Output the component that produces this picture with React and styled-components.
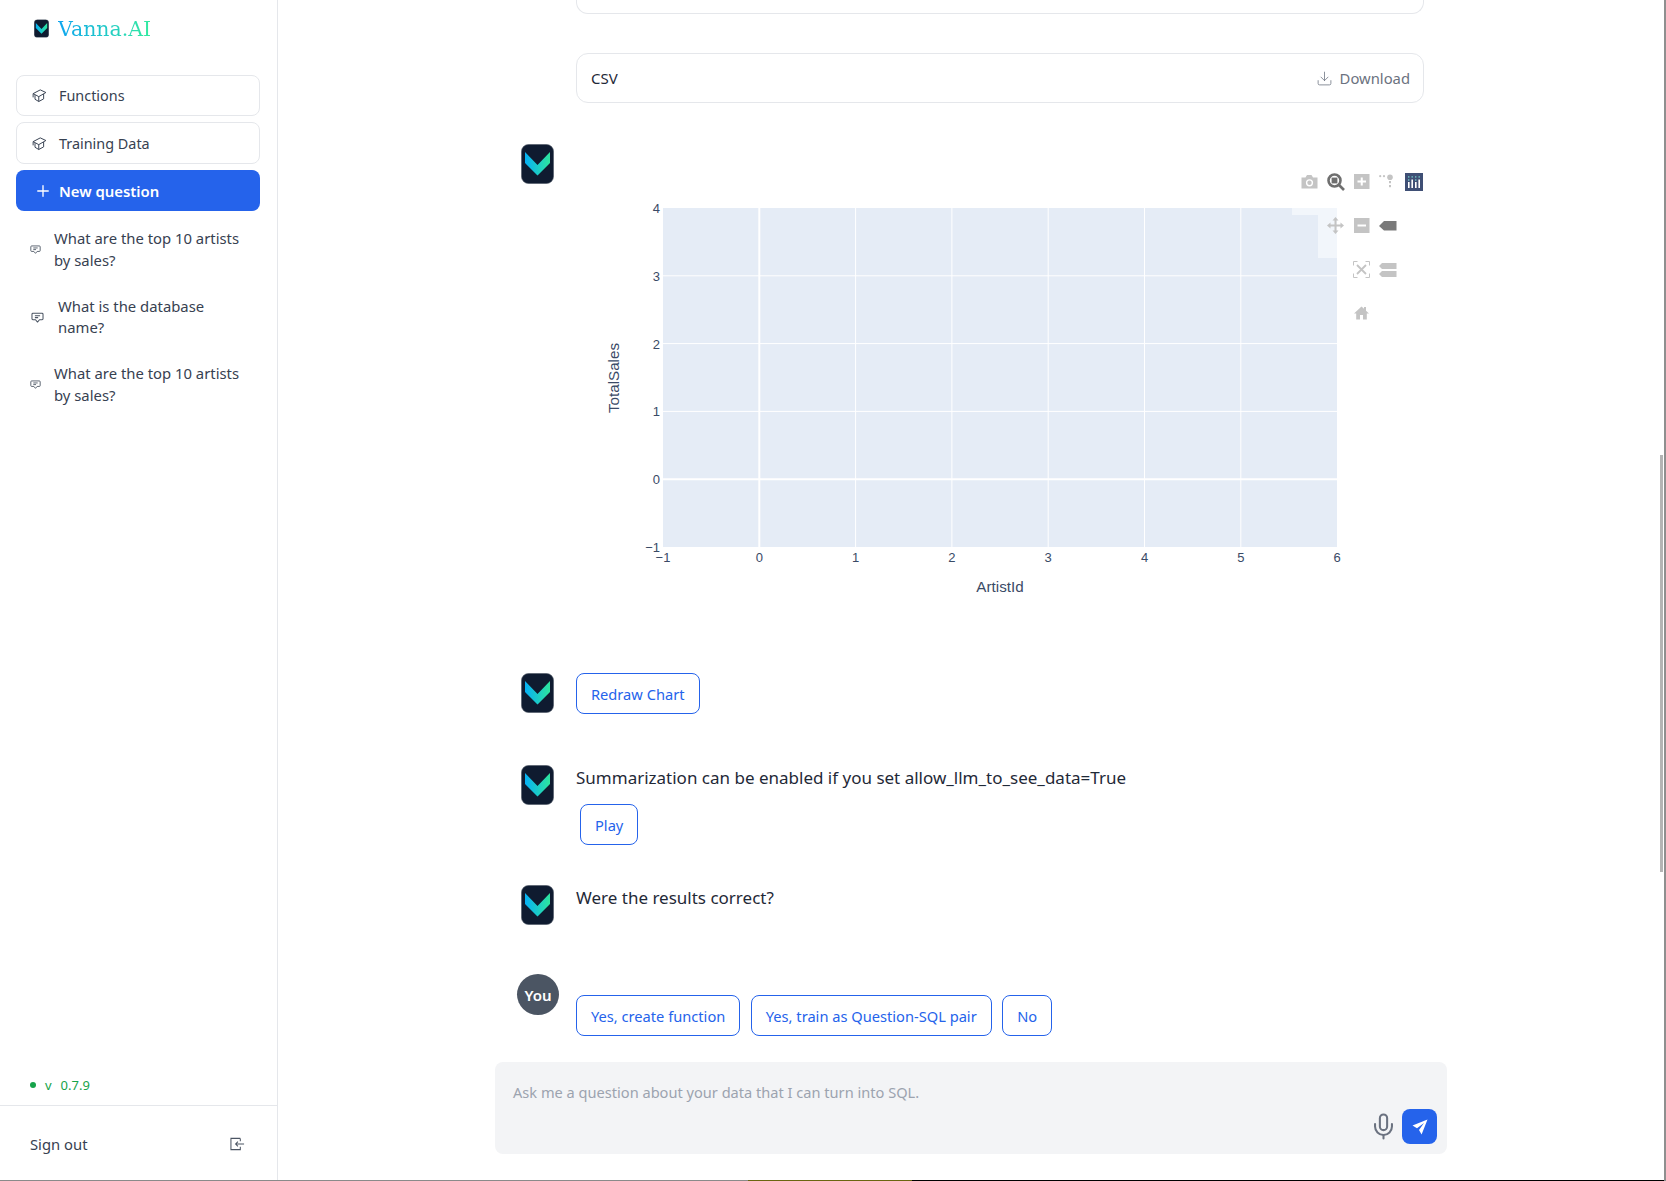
import React from 'react';
import styled, { createGlobalStyle } from 'styled-components';
import { Plus, Mic, Download } from 'lucide-react';

const Global = createGlobalStyle`
  html, body { margin: 0; padding: 0; height: 100%; background: #fff; }
  body { font-family: "Noto Sans", "Open Sans", sans-serif; color: #1f2937; overflow: hidden; }
  * { box-sizing: border-box; }
  svg { flex: none; }
`;

const Page = styled.div`
  position: relative;
  width: 1666px;
  height: 1181px;
  display: flex;
  overflow: hidden;
  background: #fff;
  border-right: 2px solid #8f8f8f;
  &::after {
    content: "";
    position: absolute;
    left: 0;
    right: 0;
    bottom: 0;
    height: 1px;
    background: linear-gradient(90deg, #8a8a8a 748px, #6b6510 748px, #6b6510 912px, #000 912px);
  }
`;

const Sidebar = styled.aside`
  width: 278px;
  flex: none;
  display: flex;
  flex-direction: column;
  border-right: 1px solid #e5e7eb;
`;
const SideTop = styled.div`
  flex: 1;
  padding: 0 17px 0 16px;
  display: flex;
  flex-direction: column;
`;
const Brand = styled.div`
  height: 75px;
  padding: 19px 0 0 18px;
  display: flex;
  align-items: flex-start;
  gap: 9px;
`;
const BrandName = styled.span`
  font-family: "DejaVu Serif", serif;
  font-size: 20.5px;
  line-height: 20px;
  background: linear-gradient(90deg, #0ea5f0, #34eba0);
  -webkit-background-clip: text;
  background-clip: text;
  color: transparent;
`;
const NavButton = styled.div`
  height: ${p => p.$h || 41}px;
  margin-bottom: 6px;
  border: 1px solid #e5e7eb;
  border-radius: 8px;
  display: flex;
  align-items: center;
  gap: 12px;
  padding-left: 15px;
  font-size: 14.4px;
  color: #374151;
`;
const NewButton = styled.div`
  height: 41px;
  border-radius: 8px;
  background: #2563eb;
  color: #fff;
  font-size: 14.9px;
  font-weight: 600;
  display: flex;
  align-items: center;
  gap: 7px;
  padding: 1px 0 0 18px;
`;
const ChatList = styled.div`
  display: flex;
  flex-direction: column;
  margin-top: 17px;
  gap: 24.5px;
`;
const ChatItem = styled.div`
  display: flex;
  align-items: center;
  gap: ${p => p.$gap}px;
  padding-left: ${p => p.$pad}px;
  font-size: 14.85px;
  line-height: 21.5px;
  color: #374151;
`;
const ChatText = styled.span`
  width: 192px;
`;
const Version = styled.div`
  height: 25px;
  padding-left: 30px;
  display: flex;
  align-items: center;
  font-size: 13px;
  color: #16a34a;
  margin-bottom: 8px;
`;
const Dot = styled.span`
  width: 6px;
  height: 6px;
  border-radius: 50%;
  background: #16a34a;
  margin-right: 9px;
`;
const VersionNo = styled.span`
  margin-left: 9px;
`;
const SignOut = styled.div`
  height: 76px;
  border-top: 1px solid #e5e7eb;
  display: flex;
  align-items: center;
  justify-content: space-between;
  padding: 0 32px 0 30px;
  font-size: 14.8px;
  color: #374151;
`;

const Main = styled.main`
  flex: 1;
  display: flex;
  flex-direction: column;
  position: relative;
  min-width: 0;
`;
const Thread = styled.div`
  flex: 1;
  overflow: hidden;
  padding-left: 298px;
  width: 1146px;
`;
const CardTail = styled.div`
  height: 14px;
  border: 1px solid #e5e7eb;
  border-top: none;
  border-radius: 0 0 12px 12px;
  margin-bottom: 39px;
`;
const DownloadCard = styled.div`
  height: 50px;
  border: 1px solid #e5e7eb;
  border-radius: 12px;
  display: flex;
  align-items: center;
  justify-content: space-between;
  padding: 0 13px 0 14px;
  font-size: 15px;
  color: #1f2937;
`;
const DownloadLink = styled.div`
  display: flex;
  align-items: center;
  gap: 7px;
  font-size: 14.8px;
  color: #6b7280;
`;
const Row = styled.div`
  display: flex;
  gap: 22px;
  margin-left: -55px;
  margin-top: ${p => p.$mt || 0}px;
`;
const Avatar = styled.div`
  width: 33px;
  flex: none;
`;
const Body = styled.div`
  flex: 1;
  min-width: 0;
`;
const Message = styled.p`
  margin: 0;
  font-size: 17px;
  line-height: 26px;
  color: #1f2937;
`;
const OutlineButton = styled.div`
  display: inline-flex;
  align-items: center;
  height: 41px;
  padding: 0 14px;
  border: 1px solid #2563eb;
  border-radius: 8px;
  font-size: 14.65px;
  color: #2563eb;
  margin-left: ${p => p.$ml || 0}px;
  margin-top: ${p => p.$mt || 0}px;
  vertical-align: top;
`;
const ButtonRow = styled.div`
  display: flex;
  gap: 10.5px;
  padding-top: 21px;
`;
const YouBadge = styled.div`
  width: 42px;
  height: 41px;
  flex: none;
  border-radius: 50%;
  background: #4b5563;
  color: #fff;
  font-size: 15px;
  font-weight: 600;
  display: flex;
  align-items: center;
  justify-content: center;
  margin-left: -4px;
`;
const YouRow = styled(Row)`
  gap: 17px;
`;
const Composer = styled.div`
  position: relative;
  margin: 0 0 27px 217px;
  width: 952px;
  height: 92px;
  flex: none;
  background: #f3f4f6;
  border-radius: 8px;
  padding: 20px 18px;
  font-size: 14.6px;
  line-height: 20px;
  color: #9ca3af;
`;
const ComposerActions = styled.div`
  position: absolute;
  right: 10px;
  bottom: 10px;
  display: flex;
  align-items: center;
  gap: 4px;
  color: #6b7280;
`;
const SendButton = styled.div`
  width: 35px;
  height: 35px;
  border-radius: 8px;
  background: #2563eb;
  display: flex;
  align-items: center;
  justify-content: center;
`;
const ScrollThumb = styled.div`
  position: absolute;
  right: 1px;
  top: 455px;
  width: 3px;
  height: 417px;
  background: #b4b4b4;
`;

const Logo = ({ w = 33, h = 40 }) => (
  <svg width={w} height={h} viewBox="0 0 33 40" style={{ display: 'block' }}>
    <defs>
      <linearGradient id={`lg${w}`} x1="0" y1="0" x2="1" y2="0">
        <stop offset="0" stopColor="#06b0f5" />
        <stop offset="1" stopColor="#2ee59d" />
      </linearGradient>
    </defs>
    <rect x="0.5" y="0.5" width="32" height="39" rx="7" fill="#0f1b30" stroke="#4b5563" strokeWidth="0.6" />
    <path d="M4 8 L16.5 21 L29 8 L29 19 L16.5 31.5 L4 19 Z" fill={`url(#lg${w})`} />
  </svg>
);

const CapIcon = () => (
  <svg width="15" height="15" viewBox="0 0 20 20" fill="none" stroke="#374151" strokeWidth="1.3" strokeLinejoin="round">
    <path d="M1.5 7.5 L11 2.5 L18.5 6 L9 11.5 Z" />
    <path d="M4 9.5 V15 L9 18 L15.5 14.5 V8" />
    <path d="M1.5 7.5 V12.5 M9 11.5 V18" />
  </svg>
);
const ChatIcon = ({ s = 12 }) => (
  <svg width={s} height={s} viewBox="0 0 20 20" fill="none" stroke="#4b5563" strokeWidth="1.6" strokeLinejoin="round">
    <path d="M3 3.5 H17 Q18.5 3.5 18.5 5 V12 Q18.5 13.5 17 13.5 H13 L10 17 L7 13.5 H3 Q1.5 13.5 1.5 12 V5 Q1.5 3.5 3 3.5 Z" />
    <path d="M6 7.2 H14 M6 10.2 H11" />
  </svg>
);
const SignOutIcon = () => (
  <svg width="15" height="14" viewBox="0 0 16 14" fill="none" stroke="#4b5563" strokeWidth="1.1">
    <path d="M11 1 H1 V13 H11 V10 M11 4 V1" />
    <path d="M15 7 H6 M8.5 4.5 L6 7 L8.5 9.5" />
  </svg>
);
const SendIcon = () => (
  <svg width="16" height="16" viewBox="0 0 16 16" fill="#fff">
    <path d="M15.5 0.5 L0.5 6.5 L5 9.2 L12 4 L7 11 L9.6 15.5 Z" />
  </svg>
);

const PlotBg = '#e5ecf6';
const ink = '#3a4a66';
const grey = '#c4c4c4';

const ModeIcon = ({ x, y, children }) => (
  <g transform={`translate(${x} ${y})`}>{children}</g>
);

const Chart = () => {
  const xs = [-1, 0, 1, 2, 3, 4, 5, 6];
  const ys = [4, 3, 2, 1, 0, -1];
  const X = v => 87 + (v + 1) * 96.3;
  const Y = v => 64 + (4 - v) * 67.8;
  return (
    <svg width="848" height="500" viewBox="0 0 848 500" style={{ display: 'block' }}>
      <rect x="87" y="64" width="674" height="339" fill={PlotBg} />
      {xs.slice(1, -1).map(v => <line key={v} x1={X(v)} x2={X(v)} y1="64" y2="403" stroke="#fff" strokeWidth={v === 0 ? 2 : 1} />)}
      {ys.slice(1, -1).map(v => <line key={v} x1="87" x2="761" y1={Y(v)} y2={Y(v)} stroke="#fff" strokeWidth={v === 0 ? 2 : 1} />)}
      <rect x="716" y="64" width="45" height="7" fill="#fff" fillOpacity="0.5" />
      <rect x="742" y="71" width="19" height="43" fill="#fff" fillOpacity="0.5" />
      {ys.map(v => <text key={v} x="84" y={Y(v) + 5} textAnchor="end" fontFamily="Liberation Sans" fontSize="13" fill={ink}>{v === -1 ? '−1' : v}</text>)}
      {xs.map(v => <text key={v} x={X(v)} y="418" textAnchor="middle" fontFamily="Liberation Sans" fontSize="13" fill={ink}>{v === -1 ? '−1' : v}</text>)}
      <text x="424" y="447.5" textAnchor="middle" fontFamily="Liberation Sans" fontSize="15.2" fill={ink}>ArtistId</text>
      <text transform="translate(43 234) rotate(-90)" textAnchor="middle" fontFamily="Liberation Sans" fontSize="15.2" fill={ink}>TotalSales</text>

      {/* camera */}
      <ModeIcon x="724.5" y="29.5">
        <path d="M1 4 H5 L6.5 1.5 H11 L12.5 4 H17 V15 H1 Z" fill={grey} />
        <circle cx="9" cy="9.3" r="3.6" fill="#fff" />
        <circle cx="9" cy="9.3" r="2.2" fill={grey} />
      </ModeIcon>
      {/* zoom */}
      <ModeIcon x="751" y="29">
        <circle cx="7.5" cy="7.5" r="6" fill="none" stroke="#6f6f6f" strokeWidth="2.6" />
        <rect x="4.6" y="4.6" width="5.8" height="5.8" fill="#6f6f6f" />
        <path d="M12 12 L17 17" stroke="#6f6f6f" strokeWidth="2.6" />
      </ModeIcon>
      {/* zoom in */}
      <ModeIcon x="778" y="30">
        <rect x="0" y="0" width="15.5" height="15" fill={grey} />
        <path d="M3.5 7.5 H12 M7.75 3.5 V11.5" stroke="#fff" strokeWidth="2" />
      </ModeIcon>
      {/* spike */}
      <ModeIcon x="803" y="29">
        <circle cx="11" cy="4.2" r="2.8" fill={grey} />
        <circle cx="1.2" cy="3.2" r="1.1" fill={grey} />
        <circle cx="5" cy="3.2" r="1.1" fill={grey} />
        <rect x="10" y="8" width="2" height="2.2" fill={grey} />
        <rect x="10" y="12" width="2" height="2.2" fill={grey} />
      </ModeIcon>
      {/* plotly logo */}
      <ModeIcon x="829" y="29">
        <rect x="0" y="0" width="18" height="18" fill="#3f4f75" />
        <g fill="#fff">
          <rect x="3" y="9" width="1.6" height="6" />
          <rect x="6.4" y="6.5" width="1.6" height="8.5" />
          <rect x="10" y="9" width="1.6" height="6" />
          <rect x="13.4" y="6.5" width="1.6" height="8.5" />
        </g>
        <g fill="#6fc5c5">
          <rect x="3" y="3.2" width="1.4" height="1.4" />
          <rect x="6.5" y="3.2" width="1.4" height="1.4" />
          <rect x="10" y="3.2" width="1.4" height="1.4" />
          <rect x="13.5" y="3.2" width="1.4" height="1.4" />
          <rect x="3" y="6.3" width="1.4" height="1.4" />
          <rect x="10" y="6.3" width="1.4" height="1.4" />
        </g>
      </ModeIcon>
      {/* pan */}
      <ModeIcon x="751" y="73">
        <path d="M8.5 0 L11.5 3.5 H9.5 V7.5 H13.5 V5.5 L17 8.5 L13.5 11.5 V9.5 H9.5 V13.5 H11.5 L8.5 17 L5.5 13.5 H7.5 V9.5 H3.5 V11.5 L0 8.5 L3.5 5.5 V7.5 H7.5 V3.5 H5.5 Z" fill={grey} />
      </ModeIcon>
      {/* zoom out */}
      <ModeIcon x="778" y="74">
        <rect x="0" y="0" width="15.5" height="15" fill={grey} />
        <path d="M3.5 7.5 H12" stroke="#fff" strokeWidth="2" />
      </ModeIcon>
      {/* hover closest */}
      <ModeIcon x="803" y="76.5">
        <path d="M0 5.5 L5 0.5 H17.5 V10 H5 Z" fill="#7a7a7a" />
      </ModeIcon>
      {/* autoscale */}
      <ModeIcon x="777.5" y="117.5">
        <path d="M0 4 V0 H4 M12 0 H16 V4 M0 12 V16 H4 M12 16 H16 V12" fill="none" stroke={grey} strokeWidth="1" />
        <path d="M3.5 3.5 L12.5 12.5 M12.5 3.5 L3.5 12.5" stroke={grey} strokeWidth="1.8" />
      </ModeIcon>
      {/* compare */}
      <ModeIcon x="803" y="119">
        <path d="M0 3 L3 0 H17.5 V6 H3 Z M0 11 L3 8 H17.5 V14 H3 Z" fill={grey} />
      </ModeIcon>
      {/* home */}
      <ModeIcon x="778" y="162">
        <path d="M0 7.5 L7.5 0.5 L10 2.8 V1 H12 V4.7 L15 7.5 H12.8 V13.5 H9 V9 H6 V13.5 H2.2 V7.5 Z" fill={grey} />
      </ModeIcon>
    </svg>
  );
};

export default function App() {
  return (
    <Page>
      <Global />
      <Sidebar>
        <SideTop>
          <Brand>
            <Logo w={15} h={19} />
            <BrandName>Vanna.AI</BrandName>
          </Brand>
          <NavButton><CapIcon />Functions</NavButton>
          <NavButton $h={42}><CapIcon />Training Data</NavButton>
          <NewButton><Plus size={18} color="#fff" strokeWidth={1.8} />New question</NewButton>
          <ChatList>
            <ChatItem $pad={14} $gap={13}><ChatIcon s={11} /><ChatText>What are the top 10 artists by sales?</ChatText></ChatItem>
            <ChatItem $pad={15} $gap={14}><ChatIcon s={13} /><ChatText>What is the database name?</ChatText></ChatItem>
            <ChatItem $pad={14} $gap={13}><ChatIcon s={11} /><ChatText>What are the top 10 artists by sales?</ChatText></ChatItem>
          </ChatList>
        </SideTop>
        <Version><Dot />v<VersionNo>0.7.9</VersionNo></Version>
        <SignOut>Sign out<SignOutIcon /></SignOut>
      </Sidebar>
      <Main>
        <Thread>
          <CardTail />
          <DownloadCard>CSV<DownloadLink><Download size={17} strokeWidth={1.1} />Download</DownloadLink></DownloadCard>
          <Row $mt={41}>
            <Avatar><Logo /></Avatar>
            <Body><Chart /></Body>
          </Row>
          <Row $mt={29}>
            <Avatar><Logo /></Avatar>
            <Body><OutlineButton>Redraw Chart</OutlineButton></Body>
          </Row>
          <Row $mt={51}>
            <Avatar><Logo /></Avatar>
            <Body>
              <Message>Summarization can be enabled if you set allow_llm_to_see_data=True</Message>
              <OutlineButton $ml={4} $mt={13}>Play</OutlineButton>
            </Body>
          </Row>
          <Row $mt={40}>
            <Avatar><Logo /></Avatar>
            <Body><Message>Were the results correct?</Message></Body>
          </Row>
          <YouRow $mt={49}>
            <YouBadge>You</YouBadge>
            <Body>
              <ButtonRow>
                <OutlineButton>Yes, create function</OutlineButton>
                <OutlineButton>Yes, train as Question-SQL pair</OutlineButton>
                <OutlineButton>No</OutlineButton>
              </ButtonRow>
            </Body>
          </YouRow>
        </Thread>
        <Composer>
          Ask me a question about your data that I can turn into SQL.
          <ComposerActions>
            <Mic size={29} strokeWidth={1.7} />
            <SendButton><SendIcon /></SendButton>
          </ComposerActions>
        </Composer>
        <ScrollThumb />
      </Main>
    </Page>
  );
}
